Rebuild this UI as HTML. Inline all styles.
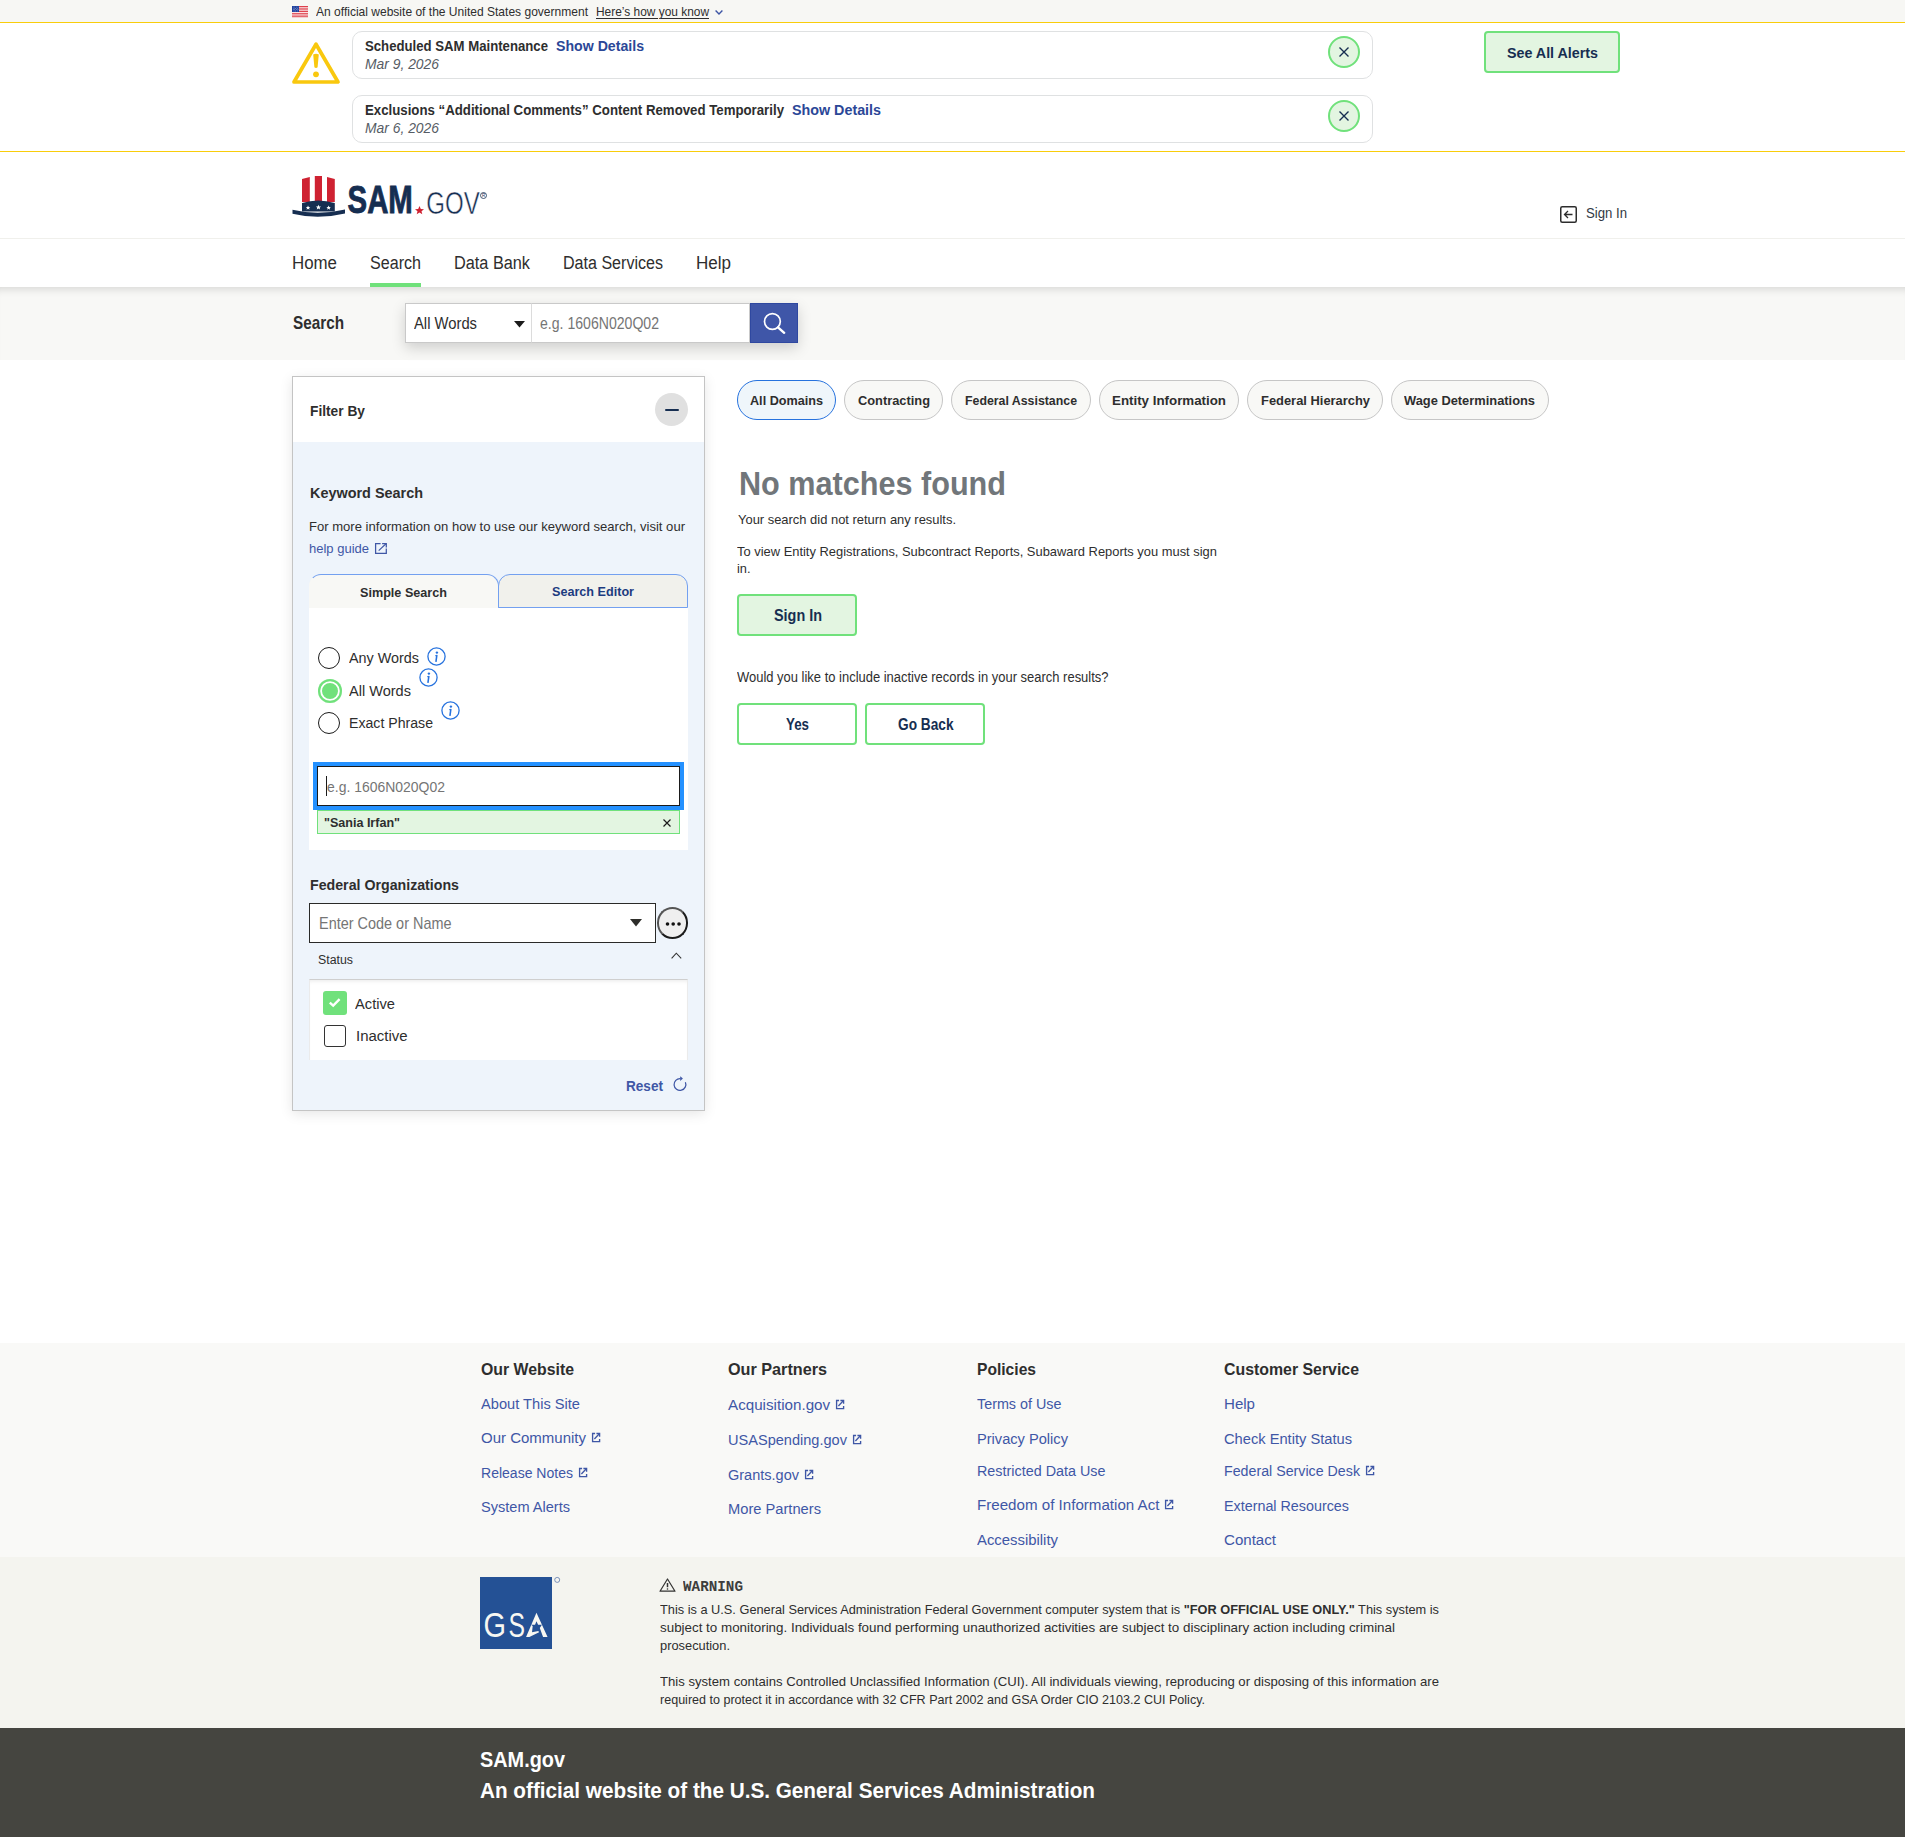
<!DOCTYPE html><html><head><meta charset="utf-8"><title>SAM.gov Search</title><style>
html,body{margin:0;padding:0;}
body{width:1905px;height:1837px;position:relative;overflow:hidden;background:#fff;font-family:"Liberation Sans",sans-serif;}
.a{position:absolute;box-sizing:border-box;}
.t{position:absolute;white-space:nowrap;line-height:1;transform-origin:0 0;}
svg.a{overflow:visible;}
</style></head><body>

<div class="a" style="left:0;top:0;width:1905px;height:22px;background:#f7f7f4"></div>
<svg class="a" style="left:292px;top:6px" width="16" height="11" viewBox="0 0 16 11"><rect width="16" height="11" fill="#fff"/><rect y="0.00" width="16" height="0.86" fill="#d8222f"/><rect y="1.72" width="16" height="0.86" fill="#d8222f"/><rect y="3.44" width="16" height="0.86" fill="#d8222f"/><rect y="5.16" width="16" height="0.86" fill="#d8222f"/><rect y="6.88" width="16" height="0.86" fill="#d8222f"/><rect y="8.60" width="16" height="0.86" fill="#d8222f"/><rect y="10.32" width="16" height="0.86" fill="#d8222f"/><rect width="7" height="6" fill="#1d3f9c"/><g fill="#fff"><circle cx="1.20" cy="1.00" r="0.35"/><circle cx="2.80" cy="1.00" r="0.35"/><circle cx="4.40" cy="1.00" r="0.35"/><circle cx="6.00" cy="1.00" r="0.35"/><circle cx="2.00" cy="2.30" r="0.35"/><circle cx="3.60" cy="2.30" r="0.35"/><circle cx="5.20" cy="2.30" r="0.35"/><circle cx="1.20" cy="3.60" r="0.35"/><circle cx="2.80" cy="3.60" r="0.35"/><circle cx="4.40" cy="3.60" r="0.35"/><circle cx="6.00" cy="3.60" r="0.35"/><circle cx="2.00" cy="4.90" r="0.35"/><circle cx="3.60" cy="4.90" r="0.35"/><circle cx="5.20" cy="4.90" r="0.35"/></g></svg>
<svg class="a" style="left:715px;top:10px" width="8" height="5" viewBox="0 0 8 5"><path d="M0.6 0.6L4 4L7.4 0.6" fill="none" stroke="#3d55a5" stroke-width="1.4"/></svg>
<div class="a" style="left:0;top:22px;width:1905px;height:1px;background:#f9cd0b"></div>
<div class="a" style="left:0;top:151px;width:1905px;height:1px;background:#f9cd0b"></div>
<svg class="a" style="left:292px;top:42px" width="48" height="42" viewBox="0 0 48 42"><path d="M24 2.2 L46 40 L2 40 Z" fill="none" stroke="#f9c80e" stroke-width="3.7" stroke-linejoin="round"/><path d="M21.2 12.6 Q24 10.8 26.8 12.6 L25.6 25.2 Q24 26.6 22.4 25.2 Z" fill="#f9c80e"/><circle cx="24" cy="32.3" r="2.9" fill="#f9c80e"/></svg>
<div class="a" style="left:352px;top:31px;width:1021px;height:48px;border:1px solid #dfe1e2;border-radius:10px;background:#fff"></div>
<div class="a" style="left:352px;top:95px;width:1021px;height:48px;border:1px solid #dfe1e2;border-radius:10px;background:#fff"></div>
<div class="a" style="left:1328px;top:36px;width:32px;height:32px;border:2px solid #70e17b;border-radius:50%;background:#e3f5e1"></div><svg class="a" style="left:1338.5px;top:47px" width="10" height="10" viewBox="0 0 10 10"><path d="M0.5 0.5L9.5 9.5M9.5 0.5L0.5 9.5" stroke="#162e51" stroke-width="1.4"/></svg>
<div class="a" style="left:1328px;top:100px;width:32px;height:32px;border:2px solid #70e17b;border-radius:50%;background:#e3f5e1"></div><svg class="a" style="left:1338.5px;top:111px" width="10" height="10" viewBox="0 0 10 10"><path d="M0.5 0.5L9.5 9.5M9.5 0.5L0.5 9.5" stroke="#162e51" stroke-width="1.4"/></svg>
<div class="a" style="left:1484px;top:31px;width:136px;height:42px;border:2px solid #70e17b;border-radius:4px;background:#e3f5e1"></div>
<svg class="a" style="left:292px;top:176px" width="200" height="42" viewBox="0 0 200 42">
<path d="M10 3 L17.8 1 L17.8 26 L10 26 Z" fill="#cf2232"/>
<path d="M22.8 0 L30 0 L30 26 L22.8 26 Z" fill="#cf2232"/>
<path d="M35 1 L42.8 3 L42.8 26 L35 26 Z" fill="#cf2232"/>
<path d="M10 27 Q26 22 42.8 27 L42.8 35.5 L10 35.5 Z" fill="#162e51"/>
<g fill="#fff"><path d="M16 29.5l.7 1.5 1.6.1-1.2 1 .4 1.6-1.5-.9-1.4.9.4-1.6-1.2-1 1.6-.1z"/><path d="M26.4 28.8l.8 1.7 1.8.1-1.4 1.1.5 1.8-1.7-1-1.6 1 .5-1.8-1.4-1.1 1.8-.1z"/><path d="M36.6 29.5l.7 1.5 1.6.1-1.2 1 .4 1.6-1.5-.9-1.4.9.4-1.6-1.2-1 1.6-.1z"/></g>
<path d="M0.5 33.8 Q26 40 53 33.5 L53 37.5 Q26 44 0.5 37.8 Z" fill="#162e51"/>
<text x="55.6" y="37.3" font-family="Liberation Sans" font-weight="700" font-size="38.5" fill="#162e51" stroke="#162e51" stroke-width="0.9" textLength="65.2" lengthAdjust="spacingAndGlyphs">SAM</text>
<path d="M127.5 30l1.3 3 3.2.2-2.5 2 .8 3.1-2.8-1.7-2.8 1.7.8-3.1-2.5-2 3.2-.2z" fill="#cf2232"/>
<text x="134.2" y="37.5" font-family="Liberation Sans" font-weight="400" font-size="30.5" fill="#162e51" stroke="#fff" stroke-width="0.5" textLength="53.5" lengthAdjust="spacingAndGlyphs">GOV</text>
<circle cx="191.5" cy="19.5" r="3" fill="none" stroke="#162e51" stroke-width="0.8"/><text x="190" y="21" font-family="Liberation Sans" font-size="4.5" fill="#162e51">R</text>
</svg>
<svg class="a" style="left:1560px;top:206px" width="17" height="17" viewBox="0 0 17 17"><rect x="0.75" y="0.75" width="15.5" height="15.5" rx="1.5" fill="none" stroke="#2d2d2d" stroke-width="1.5"/><path d="M12.5 8.5H4.5M8 5L4.5 8.5L8 12" fill="none" stroke="#2d2d2d" stroke-width="1.3"/></svg>
<div class="a" style="left:0;top:238px;width:1905px;height:1px;background:#f0f0ec"></div>
<div class="a" style="left:370px;top:283px;width:51px;height:4px;background:#70e17b"></div>
<div class="a" style="left:0;top:287px;width:1905px;height:73px;background:#f8f8f6;box-shadow:inset 0 9px 9px -7px rgba(0,0,0,0.14)"></div>
<div class="a" style="left:405px;top:303px;width:393px;height:40px;box-shadow:0 5px 14px rgba(0,0,0,0.17)"></div>
<div class="a" style="left:405px;top:303px;width:127px;height:40px;border:1px solid #c9c9c9;background:#fff"></div>
<div class="a" style="left:531px;top:303px;width:219px;height:40px;border:1px solid #c9c9c9;border-left:1px solid #dcdcdc;background:#fff"></div>
<svg class="a" style="left:513.5px;top:321px" width="11" height="7" viewBox="0 0 11 7"><path d="M0 0H11L5.5 6.5Z" fill="#1b1b1b"/></svg>
<div class="a" style="left:750px;top:303px;width:48px;height:40px;background:#3f56a8;border:1px solid #2f48a0"></div>
<svg class="a" style="left:762px;top:311px" width="24" height="24" viewBox="0 0 24 24"><circle cx="10.4" cy="10.5" r="7.9" fill="none" stroke="#fff" stroke-width="1.7"/><path d="M16 16.4L22.2 21.8" stroke="#fff" stroke-width="2.4" stroke-linecap="round"/></svg>
<div class="a" style="left:292px;top:376px;width:413px;height:735px;border:1px solid #c4c4c4;background:#eef4fb;box-shadow:0 3px 12px rgba(0,0,0,0.10)"></div>
<div class="a" style="left:293px;top:377px;width:411px;height:65px;background:#fff"></div>
<div class="a" style="left:655px;top:393px;width:33px;height:33px;border-radius:50%;background:#e0e0e0"></div>
<div class="a" style="left:665px;top:408.5px;width:14px;height:2px;border-radius:1px;background:#162e51"></div>
<svg class="a" style="left:374px;top:542px" width="14" height="13" viewBox="0 0 14 13"><path d="M6.6 1.5H1.6V11.3H12.3V6.4" fill="none" stroke="#3f57a6" stroke-width="1.25"/><path d="M8.1 1.5H12.3V5.6" fill="none" stroke="#3f57a6" stroke-width="1.25"/><path d="M4.7 8.6L12 1.8" stroke="#3f57a6" stroke-width="1.2"/></svg>
<div class="a" style="left:309px;top:608px;width:379px;height:242px;background:#fff"></div>
<div class="a" style="left:309px;top:574px;width:190px;height:34px;border:1px solid #73a0f0;border-bottom:none;border-left-color:transparent;border-radius:12px 12px 0 0;background:#f8f8f5"></div>
<div class="a" style="left:498px;top:574px;width:190px;height:34px;border:1px solid #73a0f0;border-radius:12px 12px 0 0;background:#f1f1ec"></div>
<div class="a" style="left:318px;top:647px;width:22px;height:22px;border:1.6px solid #1b1b1b;border-radius:50%;background:#fff"></div>
<div class="a" style="left:317.5px;top:679px;width:24px;height:24px;border-radius:50%;background:#70e17b;box-shadow:inset 0 0 0 2.2px #70e17b, inset 0 0 0 4px #fff"></div>
<div class="a" style="left:318px;top:712px;width:22px;height:22px;border:1.6px solid #1b1b1b;border-radius:50%;background:#fff"></div>
<svg class="a" style="left:426.5px;top:646.5px" width="19" height="19" viewBox="0 0 19 19"><circle cx="9.5" cy="9.5" r="8.6" fill="none" stroke="#2672de" stroke-width="1.3"/><circle cx="9.9" cy="5.6" r="1.2" fill="#2672de"/><path d="M9.8 8.5 L9 14.3" stroke="#2672de" stroke-width="1.6" stroke-linecap="round"/><path d="M8.2 8.7 L9.9 8.5" stroke="#2672de" stroke-width="1.1"/></svg>
<svg class="a" style="left:418.5px;top:667.5px" width="19" height="19" viewBox="0 0 19 19"><circle cx="9.5" cy="9.5" r="8.6" fill="none" stroke="#2672de" stroke-width="1.3"/><circle cx="9.9" cy="5.6" r="1.2" fill="#2672de"/><path d="M9.8 8.5 L9 14.3" stroke="#2672de" stroke-width="1.6" stroke-linecap="round"/><path d="M8.2 8.7 L9.9 8.5" stroke="#2672de" stroke-width="1.1"/></svg>
<svg class="a" style="left:440.5px;top:700.5px" width="19" height="19" viewBox="0 0 19 19"><circle cx="9.5" cy="9.5" r="8.6" fill="none" stroke="#2672de" stroke-width="1.3"/><circle cx="9.9" cy="5.6" r="1.2" fill="#2672de"/><path d="M9.8 8.5 L9 14.3" stroke="#2672de" stroke-width="1.6" stroke-linecap="round"/><path d="M8.2 8.7 L9.9 8.5" stroke="#2672de" stroke-width="1.1"/></svg>
<div class="a" style="left:313px;top:762px;width:371px;height:48px;background:#2491ff"></div>
<div class="a" style="left:317px;top:766px;width:363px;height:40px;border:1px solid #1b1b1b;background:#fff"></div>
<div class="a" style="left:326px;top:776px;width:1px;height:20px;background:#1b1b1b"></div>
<div class="a" style="left:317px;top:810px;width:363px;height:24px;border:1px solid #70e17b;background:#e3f5e1"></div>
<svg class="a" style="left:663px;top:819px" width="8" height="8" viewBox="0 0 8 8"><path d="M0.5 0.5L7.5 7.5M7.5 0.5L0.5 7.5" stroke="#1b1b1b" stroke-width="1.2"/></svg>
<div class="a" style="left:309px;top:903px;width:347px;height:40px;border:1px solid #2a2a28;background:#fff"></div>
<svg class="a" style="left:630px;top:919px" width="12" height="8" viewBox="0 0 12 8"><path d="M0 0H12L6 7.5Z" fill="#2e2e2a"/></svg>
<div class="a" style="left:656.5px;top:907px;width:31.5px;height:32px;border:2px solid #1b1b1b;border-top-color:#555;border-left-color:#555;border-radius:50%;background:#efefef"></div>
<svg class="a" style="left:664px;top:921px" width="18" height="6" viewBox="0 0 18 6"><circle cx="3.5" cy="3" r="1.8" fill="#111"/><circle cx="9.2" cy="3" r="1.8" fill="#111"/><circle cx="15" cy="3" r="1.8" fill="#111"/></svg>
<svg class="a" style="left:671px;top:951.5px" width="11" height="7" viewBox="0 0 11 7"><path d="M0.6 6.3L5.3 1.2L10.2 6.3" fill="none" stroke="#333" stroke-width="1.1"/></svg>
<div class="a" style="left:309px;top:979px;width:379px;height:81px;background:#fff;border-top:1px solid #cfcfcf;border-left:1px solid #ebebeb;border-right:1px solid #ebebeb;box-shadow:inset 0 4px 4px -3px rgba(0,0,0,0.09)"></div>
<div class="a" style="left:323px;top:991px;width:24px;height:24px;border-radius:3px;background:#70e17b"></div>
<svg class="a" style="left:328px;top:997px" width="14" height="12" viewBox="0 0 14 12"><path d="M1.8 5.6L5.2 8.6L11.6 2.2" fill="none" stroke="#fff" stroke-width="2.4"/></svg>
<div class="a" style="left:324px;top:1025px;width:22px;height:22px;border:1.6px solid #333;border-radius:3px;background:#fff"></div>
<svg class="a" style="left:668px;top:1072px" width="24" height="24" viewBox="0 0 24 24"><path d="M12.4 6.6 A5.9 5.9 0 1 0 17.4 10.2" fill="none" stroke="#3f57a6" stroke-width="1.25"/><path d="M12.2 4.2 L14.9 6.6 L12.2 9 Z" fill="#3f57a6"/></svg>
<div class="a" style="left:737px;top:380px;width:99px;height:40px;border:1px solid #2672de;border-radius:20px;background:#eff6fb"></div>
<div class="a" style="left:844px;top:380px;width:99px;height:40px;border:1px solid #c6c6c6;border-radius:20px;background:#f8f8f6"></div>
<div class="a" style="left:951px;top:380px;width:140px;height:40px;border:1px solid #c6c6c6;border-radius:20px;background:#f8f8f6"></div>
<div class="a" style="left:1099px;top:380px;width:140px;height:40px;border:1px solid #c6c6c6;border-radius:20px;background:#f8f8f6"></div>
<div class="a" style="left:1247px;top:380px;width:136px;height:40px;border:1px solid #c6c6c6;border-radius:20px;background:#f8f8f6"></div>
<div class="a" style="left:1391px;top:380px;width:158px;height:40px;border:1px solid #c6c6c6;border-radius:20px;background:#f8f8f6"></div>
<div class="a" style="left:737px;top:594px;width:120px;height:42px;border:2px solid #70e17b;border-radius:4px;background:#e3f5e1"></div>
<div class="a" style="left:737px;top:703px;width:120px;height:42px;border:2px solid #70e17b;border-radius:4px;background:#fff"></div>
<div class="a" style="left:865px;top:703px;width:120px;height:42px;border:2px solid #70e17b;border-radius:4px;background:#fff"></div>
<div class="a" style="left:0;top:1343px;width:1905px;height:214px;background:#f9f9f7"></div>
<div class="a" style="left:0;top:1557px;width:1905px;height:171px;background:#f4f4ef"></div>
<div class="a" style="left:0;top:1728px;width:1905px;height:109px;background:#454540"></div>
<svg class="a" style="left:590.5px;top:1432px" width="11" height="11" viewBox="0 0 11 11"><path d="M4.1 1.5H1.6V9.6H8.6V7.1" fill="none" stroke="#3f57a6" stroke-width="1.35"/><path d="M5.4 1.5H8.6V4.7" fill="none" stroke="#3f57a6" stroke-width="1.35"/><path d="M8.3 1.8L3.4 7" stroke="#3f57a6" stroke-width="1.3"/></svg>
<svg class="a" style="left:577.5px;top:1467px" width="11" height="11" viewBox="0 0 11 11"><path d="M4.1 1.5H1.6V9.6H8.6V7.1" fill="none" stroke="#3f57a6" stroke-width="1.35"/><path d="M5.4 1.5H8.6V4.7" fill="none" stroke="#3f57a6" stroke-width="1.35"/><path d="M8.3 1.8L3.4 7" stroke="#3f57a6" stroke-width="1.3"/></svg>
<svg class="a" style="left:834.5px;top:1398.6px" width="11" height="11" viewBox="0 0 11 11"><path d="M4.1 1.5H1.6V9.6H8.6V7.1" fill="none" stroke="#3f57a6" stroke-width="1.35"/><path d="M5.4 1.5H8.6V4.7" fill="none" stroke="#3f57a6" stroke-width="1.35"/><path d="M8.3 1.8L3.4 7" stroke="#3f57a6" stroke-width="1.3"/></svg>
<svg class="a" style="left:851.5px;top:1434px" width="11" height="11" viewBox="0 0 11 11"><path d="M4.1 1.5H1.6V9.6H8.6V7.1" fill="none" stroke="#3f57a6" stroke-width="1.35"/><path d="M5.4 1.5H8.6V4.7" fill="none" stroke="#3f57a6" stroke-width="1.35"/><path d="M8.3 1.8L3.4 7" stroke="#3f57a6" stroke-width="1.3"/></svg>
<svg class="a" style="left:803.5px;top:1468.7px" width="11" height="11" viewBox="0 0 11 11"><path d="M4.1 1.5H1.6V9.6H8.6V7.1" fill="none" stroke="#3f57a6" stroke-width="1.35"/><path d="M5.4 1.5H8.6V4.7" fill="none" stroke="#3f57a6" stroke-width="1.35"/><path d="M8.3 1.8L3.4 7" stroke="#3f57a6" stroke-width="1.3"/></svg>
<svg class="a" style="left:1163.6px;top:1498.8px" width="11" height="11" viewBox="0 0 11 11"><path d="M4.1 1.5H1.6V9.6H8.6V7.1" fill="none" stroke="#3f57a6" stroke-width="1.35"/><path d="M5.4 1.5H8.6V4.7" fill="none" stroke="#3f57a6" stroke-width="1.35"/><path d="M8.3 1.8L3.4 7" stroke="#3f57a6" stroke-width="1.3"/></svg>
<svg class="a" style="left:1364.9px;top:1465.3px" width="11" height="11" viewBox="0 0 11 11"><path d="M4.1 1.5H1.6V9.6H8.6V7.1" fill="none" stroke="#3f57a6" stroke-width="1.35"/><path d="M5.4 1.5H8.6V4.7" fill="none" stroke="#3f57a6" stroke-width="1.35"/><path d="M8.3 1.8L3.4 7" stroke="#3f57a6" stroke-width="1.3"/></svg>
<svg class="a" style="left:480px;top:1577px" width="82" height="72" viewBox="0 0 82 72"><rect width="72" height="72" fill="#245195"/>
<text x="3.6" y="60.2" font-family="Liberation Sans" font-size="35.3" fill="#f7f7f2" textLength="22.5" lengthAdjust="spacingAndGlyphs">G</text>
<text x="28.6" y="60.2" font-family="Liberation Sans" font-size="35.3" fill="#f7f7f2" textLength="16.5" lengthAdjust="spacingAndGlyphs">S</text>
<path d="M56.46 35.86 L67.56 59.95 L63.08 59.95 L59.77 50.97 L61.9 47.67 L58.1 47.67 L56.46 44.13 L55.05 47.67 L51.03 47.67 L52.7 49.1 L52 55.2 L58.35 54.05 L59.06 55.2 L49.4 59.95 L46.07 59.95 Z" fill="#f7f7f2"/>
<circle cx="77.2" cy="2.9" r="2.5" fill="none" stroke="#4a6aa5" stroke-width="0.7"/></svg>
<svg class="a" style="left:659px;top:1578px" width="17" height="14" viewBox="0 0 17 14"><path d="M8.5 1 L16 13.2 L1 13.2 Z" fill="none" stroke="#333" stroke-width="1.2" stroke-linejoin="round"/><path d="M8.5 5 V9.2" stroke="#333" stroke-width="1.5"/><circle cx="8.5" cy="11" r="0.8" fill="#333"/></svg>
<span class="t" id="ban1" style="left:316px;top:6.02px;font-size:12.2px;font-weight:400;color:#2e2e2e;font-family:'Liberation Sans', sans-serif;transform:scaleX(0.9872);">An official website of the United States government</span>
<span class="t" id="ban2" style="left:596px;top:6.02px;font-size:12.2px;font-weight:400;color:#2e2e2e;font-family:'Liberation Sans', sans-serif;transform:scaleX(0.9773);text-decoration:underline;text-underline-offset:1.5px;">Here’s how you know</span>
<span class="t" id="al1t" style="left:365px;top:39.00px;font-size:14.5px;font-weight:700;color:#2e2e2e;font-family:'Liberation Sans', sans-serif;transform:scaleX(0.9085);">Scheduled SAM Maintenance</span>
<span class="t" id="al1s" style="left:556px;top:39.00px;font-size:14.5px;font-weight:700;color:#2b4797;font-family:'Liberation Sans', sans-serif;transform:scaleX(0.9751);">Show Details</span>
<span class="t" id="al1d" style="left:365px;top:57.00px;font-size:14.5px;font-weight:400;color:#565c65;font-family:'Liberation Sans', sans-serif;font-style:italic;transform:scaleX(0.9562);">Mar 9, 2026</span>
<span class="t" id="al2t" style="left:365px;top:103.01px;font-size:14.5px;font-weight:700;color:#2e2e2e;font-family:'Liberation Sans', sans-serif;transform:scaleX(0.9129);">Exclusions “Additional Comments” Content Removed Temporarily</span>
<span class="t" id="al2s" style="left:792px;top:103.01px;font-size:14.5px;font-weight:700;color:#2b4797;font-family:'Liberation Sans', sans-serif;transform:scaleX(0.9861);">Show Details</span>
<span class="t" id="al2d" style="left:365px;top:121.00px;font-size:14.5px;font-weight:400;color:#565c65;font-family:'Liberation Sans', sans-serif;font-style:italic;transform:scaleX(0.9562);">Mar 6, 2026</span>
<span class="t" id="seeall" style="left:1507px;top:45.01px;font-size:15px;font-weight:700;color:#162e51;font-family:'Liberation Sans', sans-serif;transform:scaleX(0.9518);">See All Alerts</span>
<span class="t" id="signin" style="left:1586px;top:205.00px;font-size:15.3px;font-weight:400;color:#323a45;font-family:'Liberation Sans', sans-serif;transform:scaleX(0.8609);">Sign In</span>
<span class="t" id="nav1" style="left:292px;top:254.01px;font-size:18px;font-weight:400;color:#2e2e2e;font-family:'Liberation Sans', sans-serif;transform:scaleX(0.9372);">Home</span>
<span class="t" id="nav2" style="left:370px;top:254.01px;font-size:18px;font-weight:400;color:#2e2e2e;font-family:'Liberation Sans', sans-serif;transform:scaleX(0.8940);">Search</span>
<span class="t" id="nav3" style="left:454px;top:254.01px;font-size:18px;font-weight:400;color:#2e2e2e;font-family:'Liberation Sans', sans-serif;transform:scaleX(0.9041);">Data Bank</span>
<span class="t" id="nav4" style="left:563px;top:254.01px;font-size:18px;font-weight:400;color:#2e2e2e;font-family:'Liberation Sans', sans-serif;transform:scaleX(0.8925);">Data Services</span>
<span class="t" id="nav5" style="left:696px;top:254.01px;font-size:18px;font-weight:400;color:#2e2e2e;font-family:'Liberation Sans', sans-serif;transform:scaleX(0.9451);">Help</span>
<span class="t" id="srch" style="left:293px;top:314.01px;font-size:18.5px;font-weight:700;color:#2e2e2e;font-family:'Liberation Sans', sans-serif;transform:scaleX(0.8263);">Search</span>
<span class="t" id="allw" style="left:414px;top:315.01px;font-size:16.5px;font-weight:400;color:#2e2e2e;font-family:'Liberation Sans', sans-serif;transform:scaleX(0.8962);">All Words</span>
<span class="t" id="ph1" style="left:540px;top:315.01px;font-size:16.5px;font-weight:400;color:#757575;font-family:'Liberation Sans', sans-serif;transform:scaleX(0.8533);">e.g. 1606N020Q02</span>
<span class="t" id="filt" style="left:310px;top:403.01px;font-size:15px;font-weight:700;color:#2e2e2e;font-family:'Liberation Sans', sans-serif;transform:scaleX(0.9164);">Filter By</span>
<span class="t" id="kws" style="left:309.5px;top:485.00px;font-size:15.5px;font-weight:700;color:#2e2e2e;font-family:'Liberation Sans', sans-serif;transform:scaleX(0.9303);">Keyword Search</span>
<span class="t" id="kwd" style="left:309px;top:520.00px;font-size:13px;font-weight:400;color:#2e2e2e;font-family:'Liberation Sans', sans-serif;transform:scaleX(1.0046);">For more information on how to use our keyword search, visit our</span>
<span class="t" id="help" style="left:309px;top:542.00px;font-size:13px;font-weight:400;color:#3f57a6;font-family:'Liberation Sans', sans-serif;">help guide</span>
<span class="t" id="tab1" style="left:360px;top:586.01px;font-size:13.5px;font-weight:700;color:#2e2e2e;font-family:'Liberation Sans', sans-serif;transform:scaleX(0.9350);">Simple Search</span>
<span class="t" id="tab2" style="left:552px;top:585.00px;font-size:13.5px;font-weight:700;color:#1d3c80;font-family:'Liberation Sans', sans-serif;transform:scaleX(0.9341);">Search Editor</span>
<span class="t" id="r1" style="left:349px;top:650.00px;font-size:15.5px;font-weight:400;color:#2e2e2e;font-family:'Liberation Sans', sans-serif;transform:scaleX(0.9268);">Any Words</span>
<span class="t" id="r2" style="left:349px;top:683.01px;font-size:15.5px;font-weight:400;color:#2e2e2e;font-family:'Liberation Sans', sans-serif;transform:scaleX(0.9387);">All Words</span>
<span class="t" id="r3" style="left:349px;top:715.00px;font-size:15.5px;font-weight:400;color:#2e2e2e;font-family:'Liberation Sans', sans-serif;transform:scaleX(0.9112);">Exact Phrase</span>
<span class="t" id="ph2" style="left:327px;top:779.00px;font-size:15.5px;font-weight:400;color:#757575;font-family:'Liberation Sans', sans-serif;transform:scaleX(0.9008);">e.g. 1606N020Q02</span>
<span class="t" id="chip" style="left:323.6px;top:816.01px;font-size:13px;font-weight:700;color:#2e2e2e;font-family:'Liberation Sans', sans-serif;transform:scaleX(0.9645);">"Sania Irfan"</span>
<span class="t" id="fedorg" style="left:309.6px;top:878.01px;font-size:14.8px;font-weight:700;color:#2e2e2e;font-family:'Liberation Sans', sans-serif;transform:scaleX(0.9588);">Federal Organizations</span>
<span class="t" id="ph3" style="left:318.75px;top:916.01px;font-size:15.7px;font-weight:400;color:#757575;font-family:'Liberation Sans', sans-serif;transform:scaleX(0.9209);">Enter Code or Name</span>
<span class="t" id="status" style="left:318px;top:954.01px;font-size:12.5px;font-weight:400;color:#2e2e2e;font-family:'Liberation Sans', sans-serif;transform:scaleX(0.9877);">Status</span>
<span class="t" id="act" style="left:355.3px;top:996.01px;font-size:15.4px;font-weight:400;color:#2e2e2e;font-family:'Liberation Sans', sans-serif;transform:scaleX(0.9542);">Active</span>
<span class="t" id="inact" style="left:355.6px;top:1028.00px;font-size:15.4px;font-weight:400;color:#2e2e2e;font-family:'Liberation Sans', sans-serif;transform:scaleX(0.9727);">Inactive</span>
<span class="t" id="reset" style="left:625.5px;top:1079.02px;font-size:14.6px;font-weight:700;color:#3f57a6;font-family:'Liberation Sans', sans-serif;transform:scaleX(0.9308);">Reset</span>
<span class="t" id="pill0" style="left:750px;top:394.00px;font-size:13.2px;font-weight:700;color:#2e2e2e;font-family:'Liberation Sans', sans-serif;transform:scaleX(0.9578);">All Domains</span>
<span class="t" id="pill1" style="left:858px;top:394.00px;font-size:13.2px;font-weight:700;color:#2e2e2e;font-family:'Liberation Sans', sans-serif;transform:scaleX(0.9730);">Contracting</span>
<span class="t" id="pill2" style="left:965px;top:394.00px;font-size:13.2px;font-weight:700;color:#2e2e2e;font-family:'Liberation Sans', sans-serif;transform:scaleX(0.9354);">Federal Assistance</span>
<span class="t" id="pill3" style="left:1112px;top:394.00px;font-size:13.2px;font-weight:700;color:#2e2e2e;font-family:'Liberation Sans', sans-serif;transform:scaleX(1.0104);">Entity Information</span>
<span class="t" id="pill4" style="left:1260.5px;top:394.00px;font-size:13.2px;font-weight:700;color:#2e2e2e;font-family:'Liberation Sans', sans-serif;transform:scaleX(0.9783);">Federal Hierarchy</span>
<span class="t" id="pill5" style="left:1404px;top:394.00px;font-size:13.2px;font-weight:700;color:#2e2e2e;font-family:'Liberation Sans', sans-serif;transform:scaleX(0.9751);">Wage Determinations</span>
<span class="t" id="nomatch" style="left:739px;top:467.01px;font-size:33px;font-weight:700;color:#71767a;font-family:'Liberation Sans', sans-serif;transform:scaleX(0.9275);">No matches found</span>
<span class="t" id="res1" style="left:737.5px;top:514.01px;font-size:12.8px;font-weight:400;color:#2e2e2e;font-family:'Liberation Sans', sans-serif;transform:scaleX(1.0103);">Your search did not return any results.</span>
<span class="t" id="res2" style="left:737px;top:546.01px;font-size:12.8px;font-weight:400;color:#2e2e2e;font-family:'Liberation Sans', sans-serif;transform:scaleX(1.0087);">To view Entity Registrations, Subcontract Reports, Subaward Reports you must sign</span>
<span class="t" id="res3" style="left:737px;top:563.01px;font-size:12.8px;font-weight:400;color:#2e2e2e;font-family:'Liberation Sans', sans-serif;">in.</span>
<span class="t" id="sib" style="left:773.6px;top:608.01px;font-size:16px;font-weight:700;color:#162e51;font-family:'Liberation Sans', sans-serif;transform:scaleX(0.9001);">Sign In</span>
<span class="t" id="would" style="left:737.3px;top:670.01px;font-size:14px;font-weight:400;color:#2e2e2e;font-family:'Liberation Sans', sans-serif;transform:scaleX(0.9258);">Would you like to include inactive records in your search results?</span>
<span class="t" id="yes" style="left:786px;top:717.01px;font-size:15.6px;font-weight:700;color:#162e51;font-family:'Liberation Sans', sans-serif;transform:scaleX(0.8553);">Yes</span>
<span class="t" id="goback" style="left:897.5px;top:717.00px;font-size:16px;font-weight:700;color:#162e51;font-family:'Liberation Sans', sans-serif;transform:scaleX(0.8549);">Go Back</span>
<span class="t" id="fh1" style="left:481px;top:1361.01px;font-size:17px;font-weight:700;color:#2e2e2e;font-family:'Liberation Sans', sans-serif;transform:scaleX(0.9316);">Our Website</span>
<span class="t" id="fh2" style="left:728px;top:1361.01px;font-size:17px;font-weight:700;color:#2e2e2e;font-family:'Liberation Sans', sans-serif;transform:scaleX(0.9525);">Our Partners</span>
<span class="t" id="fh3" style="left:976.6px;top:1361.01px;font-size:17px;font-weight:700;color:#2e2e2e;font-family:'Liberation Sans', sans-serif;transform:scaleX(0.9181);">Policies</span>
<span class="t" id="fh4" style="left:1224.4px;top:1361.01px;font-size:17px;font-weight:700;color:#2e2e2e;font-family:'Liberation Sans', sans-serif;transform:scaleX(0.9338);">Customer Service</span>
<span class="t" id="fl0" style="left:481px;top:1396.01px;font-size:15.2px;font-weight:400;color:#3f57a6;font-family:'Liberation Sans', sans-serif;transform:scaleX(0.9638);">About This Site</span>
<span class="t" id="fl1" style="left:481px;top:1430.01px;font-size:15.2px;font-weight:400;color:#3f57a6;font-family:'Liberation Sans', sans-serif;transform:scaleX(0.9874);">Our Community</span>
<span class="t" id="fl2" style="left:481px;top:1465.01px;font-size:15.2px;font-weight:400;color:#3f57a6;font-family:'Liberation Sans', sans-serif;transform:scaleX(0.9235);">Release Notes</span>
<span class="t" id="fl3" style="left:481px;top:1499.02px;font-size:15.2px;font-weight:400;color:#3f57a6;font-family:'Liberation Sans', sans-serif;transform:scaleX(0.9586);">System Alerts</span>
<span class="t" id="fl4" style="left:728px;top:1397.01px;font-size:15.2px;font-weight:400;color:#3f57a6;font-family:'Liberation Sans', sans-serif;">Acquisition.gov</span>
<span class="t" id="fl5" style="left:728px;top:1432.01px;font-size:15.2px;font-weight:400;color:#3f57a6;font-family:'Liberation Sans', sans-serif;transform:scaleX(0.9587);">USASpending.gov</span>
<span class="t" id="fl6" style="left:728px;top:1467.01px;font-size:15.2px;font-weight:400;color:#3f57a6;font-family:'Liberation Sans', sans-serif;transform:scaleX(0.9556);">Grants.gov</span>
<span class="t" id="fl7" style="left:728px;top:1501.01px;font-size:15.2px;font-weight:400;color:#3f57a6;font-family:'Liberation Sans', sans-serif;transform:scaleX(0.9664);">More Partners</span>
<span class="t" id="fl8" style="left:976.6px;top:1396.02px;font-size:15.2px;font-weight:400;color:#3f57a6;font-family:'Liberation Sans', sans-serif;transform:scaleX(0.9445);">Terms of Use</span>
<span class="t" id="fl9" style="left:976.6px;top:1431.01px;font-size:15.2px;font-weight:400;color:#3f57a6;font-family:'Liberation Sans', sans-serif;transform:scaleX(0.9626);">Privacy Policy</span>
<span class="t" id="fl10" style="left:976.6px;top:1463.01px;font-size:15.2px;font-weight:400;color:#3f57a6;font-family:'Liberation Sans', sans-serif;transform:scaleX(0.9455);">Restricted Data Use</span>
<span class="t" id="fl11" style="left:976.6px;top:1497.01px;font-size:15.2px;font-weight:400;color:#3f57a6;font-family:'Liberation Sans', sans-serif;transform:scaleX(0.9962);">Freedom of Information Act</span>
<span class="t" id="fl12" style="left:976.6px;top:1532.01px;font-size:15.2px;font-weight:400;color:#3f57a6;font-family:'Liberation Sans', sans-serif;transform:scaleX(0.9792);">Accessibility</span>
<span class="t" id="fl13" style="left:1224.4px;top:1396.02px;font-size:15.2px;font-weight:400;color:#3f57a6;font-family:'Liberation Sans', sans-serif;transform:scaleX(0.9920);">Help</span>
<span class="t" id="fl14" style="left:1224.4px;top:1431.01px;font-size:15.2px;font-weight:400;color:#3f57a6;font-family:'Liberation Sans', sans-serif;transform:scaleX(0.9658);">Check Entity Status</span>
<span class="t" id="fl15" style="left:1224.4px;top:1463.01px;font-size:15.2px;font-weight:400;color:#3f57a6;font-family:'Liberation Sans', sans-serif;transform:scaleX(0.9367);">Federal Service Desk</span>
<span class="t" id="fl16" style="left:1224.4px;top:1498.01px;font-size:15.2px;font-weight:400;color:#3f57a6;font-family:'Liberation Sans', sans-serif;transform:scaleX(0.9432);">External Resources</span>
<span class="t" id="fl17" style="left:1224.4px;top:1532.01px;font-size:15.2px;font-weight:400;color:#3f57a6;font-family:'Liberation Sans', sans-serif;transform:scaleX(0.9934);">Contact</span>
<span class="t" id="warn" style="left:683px;top:1580.01px;font-size:15.5px;font-weight:700;color:#3d3d3d;font-family:'Liberation Mono', monospace;transform:scaleX(0.9213);">WARNING</span>
<span class="t" id="w1" style="left:660px;top:1603.01px;font-size:13.3px;font-weight:400;color:#2e2e2e;font-family:'Liberation Sans', sans-serif;transform:scaleX(0.9603);">This is a U.S. General Services Administration Federal Government computer system that is <b>"FOR OFFICIAL USE ONLY."</b> This system is</span>
<span class="t" id="w2" style="left:660px;top:1621.01px;font-size:13.3px;font-weight:400;color:#2e2e2e;font-family:'Liberation Sans', sans-serif;transform:scaleX(1.0065);">subject to monitoring. Individuals found performing unauthorized activities are subject to disciplinary action including criminal</span>
<span class="t" id="w3" style="left:660px;top:1639.01px;font-size:13.3px;font-weight:400;color:#2e2e2e;font-family:'Liberation Sans', sans-serif;transform:scaleX(0.9661);">prosecution.</span>
<span class="t" id="w4" style="left:660px;top:1675.01px;font-size:13.3px;font-weight:400;color:#2e2e2e;font-family:'Liberation Sans', sans-serif;transform:scaleX(0.9869);">This system contains Controlled Unclassified Information (CUI). All individuals viewing, reproducing or disposing of this information are</span>
<span class="t" id="w5" style="left:660px;top:1693.01px;font-size:13.3px;font-weight:400;color:#2e2e2e;font-family:'Liberation Sans', sans-serif;transform:scaleX(0.9434);">required to protect it in accordance with 32 CFR Part 2002 and GSA Order CIO 2103.2 CUI Policy.</span>
<span class="t" id="sg1" style="left:480.4px;top:1749.01px;font-size:22px;font-weight:700;color:#ffffff;font-family:'Liberation Sans', sans-serif;transform:scaleX(0.9031);">SAM.gov</span>
<span class="t" id="sg2" style="left:480px;top:1780.02px;font-size:22.5px;font-weight:700;color:#ffffff;font-family:'Liberation Sans', sans-serif;transform:scaleX(0.9205);">An official website of the U.S. General Services Administration</span>
</body></html>
